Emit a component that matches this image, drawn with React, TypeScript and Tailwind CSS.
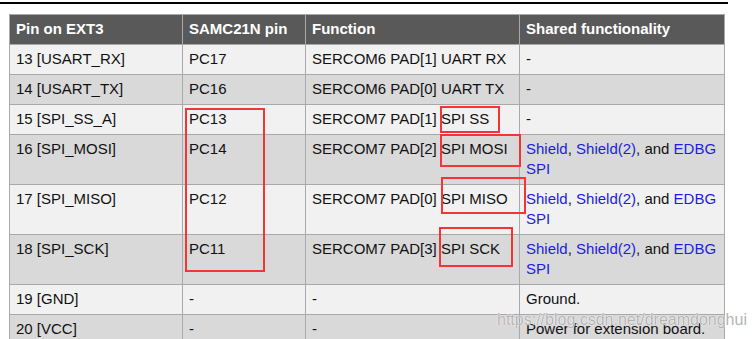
const Link = ({ children }: { children: React.ReactNode }) => (
  <span className="text-[#1c1ce6]">{children}</span>
);

const shared = (
  <>
    <Link>Shield</Link>, <Link>Shield(2)</Link>, and <Link>EDBG SPI</Link>
  </>
);

const rows: { pin: string; sam: string; fn: string; share: React.ReactNode }[] = [
  { pin: "13 [USART_RX]", sam: "PC17", fn: "SERCOM6 PAD[1] UART RX", share: "-" },
  { pin: "14 [USART_TX]", sam: "PC16", fn: "SERCOM6 PAD[0] UART TX", share: "-" },
  { pin: "15 [SPI_SS_A]", sam: "PC13", fn: "SERCOM7 PAD[1] SPI SS", share: "-" },
  { pin: "16 [SPI_MOSI]", sam: "PC14", fn: "SERCOM7 PAD[2] SPI MOSI", share: shared },
  { pin: "17 [SPI_MISO]", sam: "PC12", fn: "SERCOM7 PAD[0] SPI MISO", share: shared },
  { pin: "18 [SPI_SCK]", sam: "PC11", fn: "SERCOM7 PAD[3] SPI SCK", share: shared },
  { pin: "19 [GND]", sam: "-", fn: "-", share: "Ground." },
  { pin: "20 [VCC]", sam: "-", fn: "-", share: "Power for extension board." },
];

const td = "border border-[#a9a9a9] pl-[6px] pr-[4px] pt-[4px] pb-[5px] align-top";
const th = "border border-[#a9a9a9] pl-[6px] pr-[4px] pt-[4px] pb-[5px] text-left font-bold text-white";

export default function App() {
  return (
    <div className="relative h-[339px] w-[753px] overflow-hidden bg-white font-['Liberation_Sans',Arial,sans-serif] text-[15px] leading-[20px] text-[#111]">
      <div className="mt-[2px] h-[2px] w-[728px] bg-black" />
      <table className="ml-[9px] mt-[10px] w-[715px] table-fixed border-collapse">
        <colgroup>
          <col className="w-[173px]" />
          <col className="w-[123px]" />
          <col className="w-[214px]" />
          <col className="w-[205px]" />
        </colgroup>
        <thead>
          <tr className="bg-[#595959]">
            <th className={th}>Pin on EXT3</th>
            <th className={th}>SAMC21N pin</th>
            <th className={th}>Function</th>
            <th className={th}>Shared functionality</th>
          </tr>
        </thead>
        <tbody>
          {rows.map((r, i) => (
            <tr key={r.pin} className={i % 2 === 0 ? "bg-[#f1f1f1]" : "bg-[#d9d9d9]"}>
              <td className={td}>{r.pin}</td>
              <td className={td}>{r.sam}</td>
              <td className={td}>{r.fn}</td>
              <td className={td}>{r.share}</td>
            </tr>
          ))}
        </tbody>
      </table>

      {/* red annotation boxes */}
      <div className="absolute left-[185px] top-[108px] h-[164px] w-[80px] border-2 border-[#f53535]" />
      <div className="absolute left-[440px] top-[106px] h-[27px] w-[60px] border-2 border-[#f53535]" />
      <div className="absolute left-[440px] top-[134px] h-[33px] w-[81px] border-2 border-[#f53535]" />
      <div className="absolute left-[441px] top-[177px] h-[37px] w-[85px] border-2 border-[#f53535]" />
      <div className="absolute left-[439px] top-[227px] h-[40px] w-[74px] border-2 border-[#f53535]" />

      {/* watermark */}
      <div className="absolute left-[497px] top-[310px] text-[16px] leading-[20px] text-[#b4b4b4] [text-shadow:0_0_1px_#ffffff,0_0_1px_#ffffff]">
        https://blog.csdn.net/dreamdonghui
      </div>
    </div>
  );
}
